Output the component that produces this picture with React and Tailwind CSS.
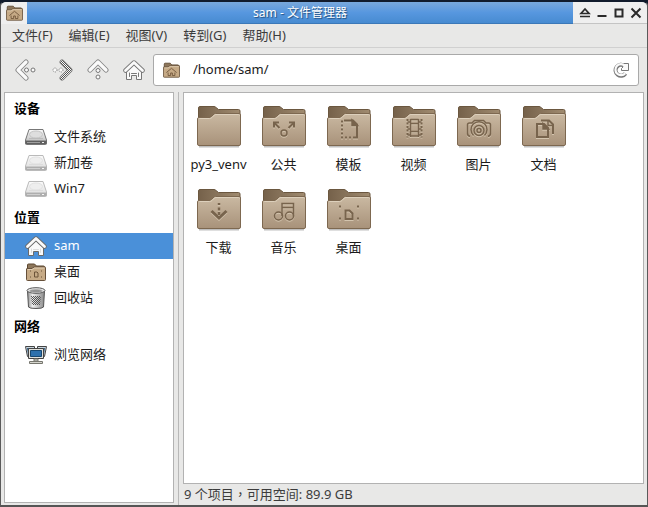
const menus = ["文件(F)", "编辑(E)", "视图(V)", "转到(G)", "帮助(H)"]

const folders = [
    { name: "py3_venv", glyph: null },
    { name: "公共", glyph: "share" },
    { name: "模板", glyph: "template" },
    { name: "视频", glyph: "video" },
    { name: "图片", glyph: "camera" },
    { name: "文档", glyph: "docs" },
    { name: "下载", glyph: "download" },
    { name: "音乐", glyph: "music" },
    { name: "桌面", glyph: "desktop" },
]

const glyphs = {
    share: (
        <>
            <circle cx="22" cy="28" r="3" />
            <path d="M17.500 23l-5-5M26.500 23l5-5" strokeWidth="2" />
            <path d="M12 22.500v-5h5M32 22.500v-5h-5" strokeWidth="2" />
        </>
    ),
    template: (
        <>
            <path d="M17 15.500h9l4 4v13h-3" strokeWidth="2" />
            <path d="M25 15v5.500h5.500z" fill="currentColor" />
            <path d="M15 15.500v17h12" strokeWidth="2" strokeDasharray="2 2" />
        </>
    ),
    video: (
        <>
            <path d="M18.500 18.500h8v8h-8zM18.500 14v18M26.500 14v18M18.500 14.500h8M18.500 31h8" />
            <path d="M15.500 14v18.500M29.500 14v18.500" strokeWidth="2" strokeDasharray="2 1.500" />
            <path d="M15.500 17h3M15.500 24h3M15.500 30h3M26.500 17h3M26.500 24h3M26.500 30h3" />
        </>
    ),
    camera: (
        <>
            <path d="M13 31.500q-3-1-2.500-4V20q0-2 2-2h2.500l2.500-2.500h9L29 18h2.500q2 0 2 2v7.500q.5 3-2.500 4" />
            <path d="M16.500 30.500a8 8 0 1 1 11 0" />
            <circle cx="22" cy="25.500" r="5" />
            <circle cx="22" cy="25.500" r="2" />
        </>
    ),
    docs: (
        <>
            <path d="M15 19h7l4 4v9H15z" strokeWidth="2" />
            <path d="M21 18.500V24h5.500z" fill="currentColor" />
            <path d="M19 15.500h8l4 4V29" strokeWidth="2" />
            <path d="M26 15v5.500h5" />
        </>
    ),
    download: (
        <>
            <path d="M14.500 23l7.500 7 7.500-7" strokeWidth="3" />
            <path d="M22 15v2M22 19.500v3M22 24v3" strokeWidth="2.500" />
        </>
    ),
    music: (
        <>
            <circle cx="16.500" cy="28" r="4" />
            <circle cx="27.500" cy="28" r="4" />
            <path d="M20 28V15.500h11.500v13M20 19.500h11.500" />
        </>
    ),
    desktop: (
        <>
            <path d="M18.500 22.500h4l3 3V31h-7z" strokeWidth="2" />
            <path d="M12 18.500h2M30 18.500h2M12 30.500h2M30 30.500h2" strokeWidth="2" />
        </>
    ),
}

function Defs() {
    return (
        <svg className="absolute size-0" aria-hidden="true">
            <defs>
                <linearGradient id="front" x1="0" y1="0" x2="0" y2="1">
                    <stop offset="0" stopColor="#cab9a2" />
                    <stop offset="1" stopColor="#a8927a" />
                </linearGradient>
                <linearGradient id="back" x1="0" y1="0" x2="1" y2="0">
                    <stop offset="0" stopColor="#75614a" />
                    <stop offset="1" stopColor="#a08b70" />
                </linearGradient>
                <linearGradient id="metal" x1="0" y1="0" x2="0" y2="1">
                    <stop offset="0" stopColor="#fafafa" />
                    <stop offset="1" stopColor="#b4b4b4" />
                </linearGradient>
                <linearGradient id="bin" x1="0" y1="0" x2="1" y2="0">
                    <stop offset="0" stopColor="#8e8e8e" />
                    <stop offset="0.300" stopColor="#eeeeee" />
                    <stop offset="1" stopColor="#898989" />
                </linearGradient>
                <pattern id="mesh" width="2" height="2" patternUnits="userSpaceOnUse">
                    <path d="M0 0h1v1H0zM1 1h1v1H1z" fill="#555" />
                </pattern>
            </defs>
        </svg>
    )
}

function FolderIcon({ glyph }) {
    return (
        <svg width="46" height="44" viewBox="-1 0 46 44" fill="none" aria-hidden="true">
            <path d="M2 41.500h40" stroke="#000" strokeOpacity="0.250" strokeWidth="2" />
            <path d="M1.500 3q0-1.500 1.500-1.500h14q1 0 2 1l2.500 2h20q1.500 0 1.500 1.500v12h-41.500z" fill="url(#back)" stroke="#6b573f" />
            <path d="M.5 14q0-1.500 1.500-1.500h10q1.500 0 2.500-1l2.500-2.500q.7-.5 1.500-.5H42q1.500 0 1.500 1.500v29q0 1.500-1.500 1.500H2q-1.500 0-1.500-1.500z" fill="url(#front)" stroke="#7d6850" />
            <path d="M1.500 14q0-.5 1-.5h10q1.500 0 2.500-1l2.500-2.500q.5-.5 1.500-.5h22.500q1 0 1 1" stroke="#ddd0bc" />
            {glyph && (
                <>
                    <g className="text-[#d3c4ae]" stroke="currentColor" strokeWidth="1.500" transform="translate(0 1)">{glyphs[glyph]}</g>
                    <g className="text-[#78644d]" stroke="currentColor" strokeWidth="1.500">{glyphs[glyph]}</g>
                </>
            )}
        </svg>
    )
}

function SmallFolder({ home, className }) {
    return (
        <svg className={className} viewBox="0 0 20 18" fill="none" aria-hidden="true">
            <path d="M1.500 2q0-1 1-1h6l2 2h7q1 0 1 1v6h-17z" fill="#8d765b" stroke="#5c472f" />
            <path d="M.5 6q0-.5.5-.5h5L8 4h11q.5 0 .5.500v12q0 1-1 1h-17q-1 0-1-1z" fill="#c6aa86" stroke="#66503a" />
            <path d="M1.500 6.500H6L8.500 5h10" stroke="#e0cfb5" />
            {home ? (
                <path d="M4 12l6-5 6 5M6 12v3.500h3V12.500h2v3h3V12" stroke="#6b5238" />
            ) : (
                <path d="M8.500 9h2.500l1 1v4H8.500zM4 8h1M15 8h1M4 14h1M15 14h1" stroke="#6b5238" />
            )}
        </svg>
    )
}

function DriveIcon({ faded }) {
    return (
        <svg width="24" height="18" viewBox="0 0 24 18" className={faded ? "opacity-50" : ""} aria-hidden="true">
            <path d="M5 1.500h14L22.500 12v3.500q0 1-1 1h-19q-1 0-1-1V12z" fill="url(#metal)" stroke="#777" />
            <path d="M1.500 12.500h21v3.500h-21z" fill="#606060" />
            <path d="M2.500 12.500h19" stroke="#999" />
            <path d="M3 14.500h13" stroke="#a0a0a0" />
            <ellipse cx="12" cy="6.500" rx="6.500" ry="3.500" fill="#dedede" stroke="#c4c4c4" />
            <path d="M5 10.500h14" stroke="#bbb" />
            <path d="M18 14.500h2" stroke="#eee" />
        </svg>
    )
}

function HomeIcon({ sidebar }) {
    const line = sidebar ? "#6a6a6a" : "#777"
    return (
        <svg width="22" height="22" viewBox="0 0 22 22" fill="none" strokeLinecap="round" strokeLinejoin="round" aria-hidden="true">
            <path d="M3.500 12v8.500h5V16.500h5v4h5V12L11 6z" fill="#fafafa" stroke={line} />
            <path d="M6.500 14v3.500M15.500 14v3.500M8.500 14.500h5" stroke={sidebar ? "#ddd" : line} />
            <path d="M2.500 11.500L11 3.500l8.500 8" stroke={line} strokeWidth="4.500" />
            <path d="M2.500 11.500L11 3.500l8.500 8" stroke="#fafafa" strokeWidth="2.800" />
        </svg>
    )
}

function TrashIcon() {
    return (
        <svg width="20" height="22" viewBox="0 0 20 22" fill="none" stroke="#555" aria-hidden="true">
            <path d="M1.500 4l1 16q1 1.500 7.500 1.500t7.500-1.500l1-16z" fill="url(#bin)" />
            <path d="M5 9h10l-1 9H6z" fill="url(#mesh)" stroke="none" />
            <ellipse cx="10" cy="3.500" rx="9" ry="2.800" fill="#e8e8e8" />
            <ellipse cx="10" cy="4" rx="6.500" ry="1.300" fill="#8c8c8c" stroke="#aaa" />
        </svg>
    )
}

function NetworkIcon() {
    return (
        <svg width="24" height="20" viewBox="0 0 24 20" fill="none" stroke="#444" aria-hidden="true">
            <path d="M1.500 1.500h9v10H3.500zM13.500 1.500h9l-2 10h-7z" fill="#c9d6df" />
            <path d="M3 3h5v6H4zM16 3h5l-1 6h-4z" fill="#315f88" stroke="none" />
            <path d="M4.500 3.500h15v10h-15z" fill="#e1e1dc" />
            <path d="M6.500 5.500h11v6h-11z" fill="#2e71ad" stroke="#17476f" />
            <path d="M10 14h4v2h-4zM5.500 16.500h13v2h-13z" fill="#d6d6ce" stroke="#76766e" />
        </svg>
    )
}

const arrows = {
    back: { line: "M11 3L3 11l8 8", dots: [[11.500, 11], [18, 11]] },
    forward: { line: "M11 3l8 8-8 8", dots: [[10, 11], [4, 11]] },
    up: { line: "M3 11l8-8 8 8", dots: [[11, 11.500], [11, 18]] },
}

function NavArrow({ type }) {
    const { line, dots } = arrows[type]
    // nothing to go forward to, so that arrow is drawn stippled
    const stippled = type === "forward"
    return (
        <svg width="22" height="22" viewBox="0 0 22 22" fill="none" strokeLinecap="round" strokeLinejoin="round" aria-hidden="true">
            <path d={line} stroke="#858585" strokeWidth="5" />
            <path d={line} stroke="#fafafa" strokeWidth="3.200" />
            {stippled && <path d={line} stroke="url(#mesh)" strokeWidth="4" />}
            {dots.map(([x, y]) => (
                <circle key={`${x}-${y}`} cx={x} cy={y} r="2" fill="#fafafa" stroke="#777" strokeDasharray={stippled ? "1 1" : undefined} strokeLinecap="butt" />
            ))}
        </svg>
    )
}

function ReloadIcon() {
    return (
        <svg width="16" height="16" viewBox="0 0 16 16" fill="none" aria-hidden="true">
            <path d="M12.500 11.500A5.500 5.500 0 1 1 11.500 4" stroke="#777" strokeWidth="4" />
            <path d="M8.500 8.500V6.500L10 5 9 1.500h6.500v7z" fill="#fafafa" stroke="#777" />
            <path d="M12.200 11.200A5.500 5.500 0 1 1 12 4" stroke="#fafafa" strokeWidth="2.200" />
        </svg>
    )
}

function WindowIcon({ type }) {
    return (
        <svg width="12" height="12" viewBox="0 0 12 12" fill="none" stroke="#2a2a2a" strokeWidth="2" aria-hidden="true">
            {type === "shade" && <path d="M6 2L2 6.500h8zM1 9.500h10" strokeWidth="1.700" />}
            {type === "minimize" && <path d="M1.500 9h9" />}
            {type === "maximize" && <path d="M2.500 2.500h7v7h-7z" />}
            {type === "close" && <path d="M1.500 1.500l9 9M10.500 1.500l-9 9" />}
        </svg>
    )
}

const windowButtons = [
    { type: "shade", label: "卷起" },
    { type: "minimize", label: "最小化" },
    { type: "maximize", label: "最大化" },
    { type: "close", label: "关闭" },
]

const places = [
    {
        title: "设备",
        items: [
            { name: "文件系统", icon: <DriveIcon /> },
            { name: "新加卷", icon: <DriveIcon faded /> },
            { name: "Win7", icon: <DriveIcon faded /> },
        ],
    },
    {
        title: "位置",
        items: [
            { name: "sam", icon: <HomeIcon sidebar />, active: true },
            { name: "桌面", icon: <SmallFolder className="h-[18px] w-5" /> },
            { name: "回收站", icon: <TrashIcon /> },
        ],
    },
    {
        title: "网络",
        items: [{ name: "浏览网络", icon: <NetworkIcon /> }],
    },
]

function TitleBar() {
    return (
        <header className="flex h-[22px] rounded-t-md bg-[#efefef]">
            <div className="flex w-[26px] items-center justify-center">
                <SmallFolder home className="h-4 w-[17px]" />
            </div>
            <h1 className="flex-1 border-b border-[#3b78b8] bg-linear-to-b from-[#79a8dc] via-[#5797df] to-[#478bd1] text-center text-[12px] leading-[22px] text-white [text-shadow:1px_1px_1px_#234f7d]">
                sam - 文件管理器
            </h1>
            <div className="flex w-[74px] items-center justify-center gap-[5px] border-b border-[#c4c4c4]">
                {windowButtons.map((b) => (
                    <button key={b.type} type="button" aria-label={b.label}>
                        <WindowIcon type={b.type} />
                    </button>
                ))}
            </div>
        </header>
    )
}

export default function App() {
    return (
        <div className="bg-[#111b2c] font-['Noto_Sans','Noto_Sans_CJK_SC',sans-serif] text-[13px] text-[#1a1a1a]">
            <Defs />
            <div className="flex min-h-screen flex-col rounded-t-md border border-t-2 border-b-2 border-t-[#111b2c] border-r-[#5a5a5a] border-b-[#555] border-l-[#5a5a5a] bg-[#e8e8e7]">
                <TitleBar />
                <nav className="flex h-6 items-center gap-4 border-b border-[#d0d0d0] px-[11px] text-[#3c3c3c]">
                    {menus.map((m) => (
                        <button key={m} type="button">{m}</button>
                    ))}
                </nav>

                <div className="flex h-11 items-center pr-2 pl-[14px]">
                    <div className="flex gap-[14px] pr-2">
                        <button type="button" aria-label="后退"><NavArrow type="back" /></button>
                        <button type="button" aria-label="前进"><NavArrow type="forward" /></button>
                        <button type="button" aria-label="向上"><NavArrow type="up" /></button>
                        <button type="button" aria-label="主目录"><HomeIcon /></button>
                    </div>
                    <div className="flex h-8 flex-1 items-center rounded-[3px] border border-[#a9a9a9] bg-white px-[9px]">
                        <SmallFolder home className="h-4 w-[17px]" />
                        <input aria-label="路径" defaultValue="/home/sam/" className="ml-[13px] min-w-0 flex-1 bg-transparent outline-none" />
                        <button type="button" aria-label="重新加载"><ReloadIcon /></button>
                    </div>
                </div>

                <div className="flex flex-1 px-[3px]">
                    <aside className="mb-[2px] w-[170px] shrink-0 border border-[#b2b2b2] bg-white">
                        {places.map((group) => (
                            <section key={group.title}>
                                <h2 className="h-[31px] pl-[9px] leading-[31px] font-bold text-black">{group.title}</h2>
                                <ul>
                                    {group.items.map((item) => (
                                        <li key={item.name}>
                                            <button
                                                type="button"
                                                className={`flex h-[26px] w-full items-center gap-[6px] pl-[19px] text-left ${item.active ? "bg-[#4a90d9] text-white" : ""}`}
                                            >
                                                <span className="flex w-6 justify-center">{item.icon}</span>
                                                {item.name}
                                            </button>
                                        </li>
                                    ))}
                                </ul>
                            </section>
                        ))}
                    </aside>
                    <div className="mr-1 ml-1 w-px bg-[#b8b8b8]" />
                    <main className="flex min-w-0 flex-1 flex-col">
                        <div className="grid flex-1 auto-rows-[83px] grid-cols-[repeat(auto-fill,65px)] content-start border border-[#b2b2b2] bg-white pt-3 pr-16 pl-[2px]">
                            {folders.map((f) => (
                                <button key={f.name} type="button" className="flex flex-col items-center gap-[5px]">
                                    <FolderIcon glyph={f.glyph} />
                                    <span className="leading-5">{f.name}</span>
                                </button>
                            ))}
                        </div>
                        <footer className="h-[21px] pl-px font-['Noto_Sans','Noto_Sans_CJK_TC',sans-serif] leading-5 text-[#3c3c3c]">
                            9 个项目，可用空间: 89.9 GB
                        </footer>
                    </main>
                </div>
            </div>
        </div>
    )
}
